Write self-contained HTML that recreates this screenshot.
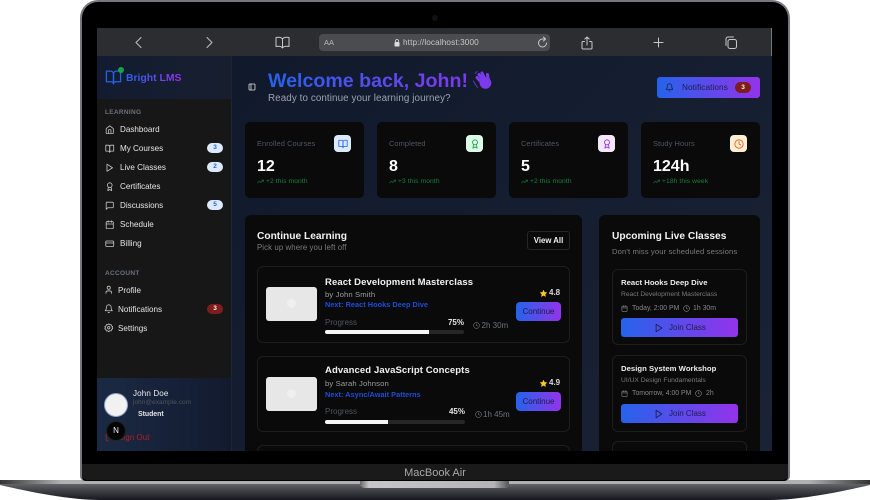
<!DOCTYPE html>
<html lang="en"><head><meta charset="utf-8"><title>Bright LMS</title>
<style>
*{box-sizing:border-box;margin:0;padding:0}
html,body{width:870px;height:500px;overflow:hidden;background:#fff;font-family:"Liberation Sans",sans-serif}
.a{position:absolute}
.t{position:absolute;white-space:nowrap;line-height:12px;height:12px}
.i{position:absolute;fill:none;stroke:currentColor;stroke-width:2;stroke-linecap:round;stroke-linejoin:round}
.grad{background:linear-gradient(90deg,#2563eb,#9333ea)}
#screen{position:absolute;left:97px;top:28px;width:675px;height:423px;overflow:hidden;background:linear-gradient(135deg,#0f172a,#1a2235);filter:blur(.3px)}
#screen>*{margin-left:-97px;margin-top:-28px}
.nav{font-size:8.100px;color:#e5e5e5}
.nic{color:#c8c8c8;width:9.500px;height:9.500px;stroke-width:2}
.bdg{position:absolute;left:207px;width:16px;height:10px;border-radius:5px;background:#dbeafe;color:#2563eb;font-size:6.500px;font-weight:bold;text-align:center;line-height:10px}
.sec{font-size:6.500px;font-weight:bold;color:#6b7280;letter-spacing:.3px}
.stat{position:absolute;top:122px;width:119px;height:76px;background:#0a0a0a;border-radius:5px}
.lab{font-size:7.400px;color:#4f5561;letter-spacing:.1px}
.val{font-size:16px;font-weight:bold;color:#fff}
.tr{font-size:6.700px;color:#15803d;letter-spacing:.1px}
.sq{position:absolute;top:135px;width:17px;height:17px;border-radius:4px}
.sq svg{position:absolute;left:3.500px;top:3.500px;width:10px;height:10px}
.panel{position:absolute;top:215px;height:250px;background:#0a0a0a;border-radius:6px}
.card{position:absolute;background:#0a0a0a;border:1px solid #1d1d1f;border-radius:6px}
.thumb{position:absolute;left:266px;width:51px;height:34px;background:#e7e7e7;border-radius:3px}
.thumb:after{content:"";position:absolute;left:21px;top:12px;width:9px;height:9px;border-radius:50%;background:#efefef}
.h{font-size:9.500px;font-weight:bold;color:#f2f2f2;letter-spacing:.1px}
.by{font-size:7.700px;color:#9b9b9b;letter-spacing:.12px}
.nx{font-size:7.300px;color:#1d4ed8;font-weight:bold;letter-spacing:.05px}
.pr{font-size:8px;color:#4f5561}
.pc{font-size:8px;color:#e5e5e5;font-weight:bold}
.bar{position:absolute;height:4px;background:#262626;border-radius:2px;overflow:hidden}
.bar div{height:100%;background:#f5f5f5}
.tm{font-size:8px;color:#6b7280}
.btn{position:absolute;left:516px;width:45px;border-radius:4px;color:#1e1b4b;font-size:8px;text-align:center}
.h2{font-size:7.700px;font-weight:bold;color:#ececec;letter-spacing:.03px}
.s2{font-size:6.700px;color:#7a7a7a}
.m2{font-size:6.900px;color:#85858a}
.jb{position:absolute;left:621px;width:117px;height:19px;border-radius:3px;color:#1e1b4b;font-size:8px}
.jb span{position:absolute;left:48px;top:0;line-height:19px}
.jb svg{position:absolute;left:33px;top:4.500px;width:10px;height:10px;stroke-width:2}
.tt{font-size:10.200px;font-weight:bold;color:#f2f2f2}
</style></head><body>
<svg width="0" height="0" style="position:absolute">
<symbol id="book" viewBox="0 0 24 24"><path d="M2 3h6a4 4 0 0 1 4 4v14a3 3 0 0 0-3-3H2z"/><path d="M22 3h-6a4 4 0 0 0-4 4v14a3 3 0 0 1 3-3h7z"/></symbol>
<symbol id="home" viewBox="0 0 24 24"><path d="M3 9l9-7 9 7v11a2 2 0 0 1-2 2H5a2 2 0 0 1-2-2z"/><path d="M9 22V12h6v10"/></symbol>
<symbol id="play" viewBox="0 0 24 24"><polygon points="5 3 19 12 5 21"/></symbol>
<symbol id="award" viewBox="0 0 24 24"><circle cx="12" cy="8" r="6"/><path d="M15.477 12.89 17 22l-5-3-5 3 1.523-9.11"/></symbol>
<symbol id="msg" viewBox="0 0 24 24"><path d="M21 15a2 2 0 0 1-2 2H7l-4 4V5a2 2 0 0 1 2-2h14a2 2 0 0 1 2 2z"/></symbol>
<symbol id="cal" viewBox="0 0 24 24"><rect x="3" y="4" width="18" height="18" rx="2"/><path d="M16 2v4M8 2v4M3 10h18"/></symbol>
<symbol id="card" viewBox="0 0 24 24"><rect x="2" y="5" width="20" height="14" rx="2"/><path d="M2 10h20"/></symbol>
<symbol id="user" viewBox="0 0 24 24"><path d="M19 21v-2a4 4 0 0 0-4-4H9a4 4 0 0 0-4 4v2"/><circle cx="12" cy="7" r="4"/></symbol>
<symbol id="bell" viewBox="0 0 24 24"><path d="M6 8a6 6 0 0 1 12 0c0 7 3 9 3 9H3s3-2 3-9"/><path d="M10.3 21a1.94 1.94 0 0 0 3.4 0"/></symbol>
<symbol id="gear" viewBox="0 0 24 24"><circle cx="12" cy="12" r="3"/><path d="M12 2l2.500 2.500 3.500-.5 1 3.500 3 2-1.500 2.500 1.500 2.500-3 2-1 3.500-3.500-.5L12 22l-2.500-2.500-3.500.5-1-3.500-3-2L3.500 12 2 9.500l3-2L6 4l3.500.5z"/></symbol>
<symbol id="clock" viewBox="0 0 24 24"><circle cx="12" cy="12" r="10"/><path d="M12 6v6l4 2"/></symbol>
<symbol id="trend" viewBox="0 0 24 24"><path d="M22 7l-8.500 8.500-5-5L2 17"/><path d="M16 7h6v6"/></symbol>
<symbol id="panel" viewBox="0 0 24 24"><rect x="3" y="3" width="18" height="18" rx="2"/><path d="M9 3v18"/></symbol>
<symbol id="out" viewBox="0 0 24 24"><path d="M9 21H5a2 2 0 0 1-2-2V5a2 2 0 0 1 2-2h4"/><path d="M16 17l5-5-5-5M21 12H9"/></symbol>
</svg>

<!-- base -->
<svg class="a" style="left:0;top:478px" width="870" height="22" viewBox="0 0 870 22">
<defs>
<linearGradient id="bg" x1="0" y1="0" x2="0" y2="1"><stop offset="0" stop-color="#74757a"/><stop offset=".45" stop-color="#45464c"/><stop offset="1" stop-color="#17181f"/></linearGradient>
<linearGradient id="st" x1="0" y1="0" x2="1" y2="0"><stop offset="0" stop-color="#333"/><stop offset=".07" stop-color="#b0b0b2"/><stop offset=".93" stop-color="#b0b0b2"/><stop offset="1" stop-color="#333"/></linearGradient>
<linearGradient id="nt" x1="0" y1="0" x2="1" y2="0"><stop offset="0" stop-color="#666"/><stop offset=".06" stop-color="#c6c6c8"/><stop offset=".9" stop-color="#b4b4b6"/><stop offset="1" stop-color="#55565a"/></linearGradient>
</defs>
<path d="M0 3H870V7C840 14 800 22 770 22H100C70 22 30 14 0 7Z" fill="url(#bg)"/>
<rect x="0" y="2" width="870" height="4" fill="url(#st)"/>
<path d="M360 2H509V8Q509 10 505 10H366Q360 10 360 6Z" fill="url(#nt)"/>
</svg>

<!-- body -->
<div class="a" style="left:80px;top:0;width:710px;height:481px;background:#000;border:2px solid #77787c;border-bottom:0;border-radius:18px 18px 5px 5px"></div>
<div class="a" style="left:82px;top:464px;width:706px;height:16px;background:#1a1a1a;border-radius:0 0 5px 5px"></div>
<div class="t" style="left:82px;width:706px;text-align:center;top:467px;font-size:11px;color:#a8a8a8">MacBook Air</div>
<div class="a" style="left:432px;top:15px;width:6px;height:6px;border-radius:50%;background:#101114"></div>

<div id="screen">
<!-- browser bar -->
<div class="a" style="left:97px;top:28px;width:675px;height:28px;background:#2b2d30"></div>
<div class="a" style="left:771px;top:28px;width:1px;height:28px;background:#777"></div>
<svg class="i" style="left:134px;top:36px;color:#b5b5b5;stroke-width:1.200" width="9" height="13" viewBox="0 0 9 13"><path d="M7 1.500 2 6.500l5 5"/></svg>
<svg class="i" style="left:205px;top:36px;color:#b5b5b5;stroke-width:1.200" width="9" height="13" viewBox="0 0 9 13"><path d="M2 1.500l5 5-5 5"/></svg>
<svg class="i" style="left:275px;top:36px;color:#c8c8c8;stroke-width:1" width="15" height="13" viewBox="0 0 15 13"><path d="M7.500 3C6.500 1.500 4 1 1 1.500v9C4 10 6.500 10.500 7.500 12c1-1.500 3.500-2 6.500-1.500v-9C11 1 8.500 1.500 7.500 3zM7.500 3v9"/></svg>
<div class="a" style="left:319px;top:34px;width:231px;height:17px;background:#4a4c4f;border-radius:4px"></div>
<div class="t" style="left:324px;top:37px;font-size:7.500px;color:#b8b8b8">AA</div>
<svg class="a" style="left:393.500px;top:39px" width="6" height="8" viewBox="0 0 6 8"><rect x=".5" y="3" width="5" height="4.500" rx=".8" fill="#ddd"/><path d="M1.500 3V2a1.500 1.500 0 0 1 3 0v1" fill="none" stroke="#ddd" stroke-width=".8"/></svg>
<div class="t" style="left:403px;top:37px;font-size:8.200px;color:#c8c8c8;letter-spacing:.12px">http://localhost:3000</div>
<svg class="i" style="left:537px;top:36px;color:#c8c8c8;stroke-width:1" width="11" height="12" viewBox="0 0 11 12"><path d="M9.500 7A4 4 0 1 1 5.500 3H8M6.500 1 8.500 3 6.500 5"/></svg>
<svg class="i" style="left:581px;top:36px;color:#c8c8c8;stroke-width:1" width="12" height="14" viewBox="0 0 12 14"><path d="M3.500 5.500H2a1 1 0 0 0-1 1v5.500a1 1 0 0 0 1 1h8a1 1 0 0 0 1-1V6.500a1 1 0 0 0-1-1H8.500M6 9V1M3.800 3 6 1l2.200 2"/></svg>
<svg class="i" style="left:653px;top:37px;color:#c8c8c8;stroke-width:1" width="11" height="11" viewBox="0 0 11 11"><path d="M5.500 1v9M1 5.500h9"/></svg>
<svg class="i" style="left:724px;top:36px;color:#c8c8c8;stroke-width:1" width="14" height="14" viewBox="0 0 14 14"><rect x="4" y="3.500" width="8.500" height="9" rx="2"/><path d="M2 9.500V3a2 2 0 0 1 2-2h5.500"/></svg>

<!-- sidebar -->
<div class="a" style="left:97px;top:56px;width:134px;height:43px;background:linear-gradient(90deg,#131b30,#171f2f)"></div>
<div class="a" style="left:97px;top:99px;width:134px;height:279px;background:#171717"></div>
<div class="a" style="left:97px;top:378px;width:134px;height:73px;background:linear-gradient(90deg,#1b2a44,#121a2e)"></div>
<div class="a" style="left:231px;top:56px;width:1px;height:395px;background:#1e2433"></div>
<svg class="i" style="left:105px;top:69px;color:#2563eb;stroke-width:1.800" width="17" height="17"><use href="#book"/></svg>
<div class="a" style="left:118px;top:67px;width:6px;height:6px;border-radius:50%;background:#16a34a"></div>
<div class="t" style="left:126px;top:73px;font-size:10.400px;font-weight:bold;background:linear-gradient(90deg,#2563eb,#9333ea);-webkit-background-clip:text;background-clip:text;color:transparent">Bright LMS</div>

<div class="t sec" style="left:105px;top:107px">LEARNING</div>
<svg class="i nic" style="left:105px;top:124.500px"><use href="#home"/></svg><div class="t nav" style="left:120px;top:124px">Dashboard</div>
<svg class="i nic" style="left:105px;top:143.500px"><use href="#book"/></svg><div class="t nav" style="left:120px;top:143px">My Courses</div><div class="bdg" style="top:143px">3</div>
<svg class="i nic" style="left:105px;top:162.500px"><use href="#play"/></svg><div class="t nav" style="left:120px;top:162px">Live Classes</div><div class="bdg" style="top:162px">2</div>
<svg class="i nic" style="left:105px;top:181.500px"><use href="#award"/></svg><div class="t nav" style="left:120px;top:181px">Certificates</div>
<svg class="i nic" style="left:105px;top:200.500px"><use href="#msg"/></svg><div class="t nav" style="left:120px;top:200px">Discussions</div><div class="bdg" style="top:200px">5</div>
<svg class="i nic" style="left:105px;top:219.500px"><use href="#cal"/></svg><div class="t nav" style="left:120px;top:219px">Schedule</div>
<svg class="i nic" style="left:105px;top:238.500px"><use href="#card"/></svg><div class="t nav" style="left:120px;top:238px">Billing</div>

<div class="t sec" style="left:105px;top:268px">ACCOUNT</div>
<svg class="i nic" style="left:104px;top:285px"><use href="#user"/></svg><div class="t nav" style="left:118px;top:285px">Profile</div>
<svg class="i nic" style="left:104px;top:304px"><use href="#bell"/></svg><div class="t nav" style="left:118px;top:304px">Notifications</div><div class="bdg" style="top:304px;background:#7f1d1d;color:#f5f5f5">3</div>
<svg class="i nic" style="left:104px;top:323px"><use href="#gear"/></svg><div class="t nav" style="left:118px;top:323px">Settings</div>

<div class="a" style="left:103.500px;top:393px;width:24px;height:24px;border-radius:50%;background:#f1f1f1;border:1px solid #8da4c8"></div>
<div class="t" style="left:133px;top:388px;font-size:8px;color:#ececec;letter-spacing:.15px">John Doe</div>
<div class="t" style="left:133px;top:397px;font-size:6.400px;color:#4b5563;letter-spacing:.1px">john@example.com</div>
<div class="t" style="left:138px;top:409px;font-size:6.900px;font-weight:bold;color:#e5e5e5">Student</div>
<svg class="i" style="left:105px;top:433px;color:#b91c1c" width="9" height="9"><use href="#out"/></svg>
<div class="t" style="left:118px;top:432px;font-size:7.900px;color:#b91c1c;letter-spacing:.1px">Sign Out</div>
<div class="a" style="left:107px;top:422px;width:18px;height:18px;border-radius:50%;background:#050505;color:#f5f5f5;font-size:8px;text-align:center;line-height:18px;box-shadow:0 0 0 1px #222">N</div>

<!-- header -->
<svg class="i" style="left:248px;top:83px;color:#e0e0e0;stroke-width:2.400" width="8" height="8"><use href="#panel"/></svg>
<div class="t" style="left:268px;top:69px;height:24px;line-height:24px;font-size:19.600px;font-weight:bold;background:linear-gradient(90deg,#2563eb,#7c3aed 95%);-webkit-background-clip:text;background-clip:text;color:transparent">Welcome back, John!</div>
<svg class="a" style="left:472px;top:69px" width="21" height="21" viewBox="0 0 21 21"><circle cx="13.500" cy="14" r="5.800" fill="#7c3aed"/><path d="M11 15 5 8.500M12.500 13 7 5.500M14 12l-4-8M16.500 12.500l-1-7" stroke="#7c3aed" stroke-width="3" stroke-linecap="round" fill="none"/><path d="M5 2.500 3 4.500M1.500 12l1.500 3M3.500 15.500l2 3" stroke="#5b34c9" stroke-width="1" stroke-linecap="round" fill="none"/></svg>
<div class="t" style="left:268px;top:93px;font-size:9.800px;color:#9ca3af;letter-spacing:.1px">Ready to continue your learning journey?</div>

<div class="a grad" style="left:657px;top:77px;width:103px;height:21px;border-radius:3px"></div>
<svg class="i" style="left:665px;top:83px;color:#1e1b4b" width="9" height="9"><use href="#bell"/></svg>
<div class="t" style="left:682px;top:81.500px;font-size:8.200px;color:#1e1b4b;letter-spacing:.1px">Notifications</div>
<div class="a" style="left:735px;top:82px;width:16px;height:11px;border-radius:5.500px;background:#7f1d1d;color:#f5f5f5;font-size:6.500px;font-weight:bold;text-align:center;line-height:11px">3</div>

<!-- stats -->
<div class="stat" style="left:245px"></div><div class="stat" style="left:377px"></div><div class="stat" style="left:509px"></div><div class="stat" style="left:641px"></div>
<div class="t lab" style="left:257px;top:138px">Enrolled Courses</div>
<div class="t lab" style="left:389px;top:138px">Completed</div>
<div class="t lab" style="left:521px;top:138px">Certificates</div>
<div class="t lab" style="left:653px;top:138px">Study Hours</div>
<div class="sq" style="left:334px;background:#dbeafe;color:#2563eb"><svg class="i"><use href="#book"/></svg></div>
<div class="sq" style="left:466px;background:#dcfce7;color:#16a34a"><svg class="i"><use href="#award"/></svg></div>
<div class="sq" style="left:598px;background:#f3e8ff;color:#9333ea"><svg class="i"><use href="#award"/></svg></div>
<div class="sq" style="left:730px;background:#ffedd5;color:#ea580c"><svg class="i"><use href="#clock"/></svg></div>
<div class="t val" style="left:257px;top:160px;height:14px;line-height:14px">12</div>
<div class="t val" style="left:389px;top:160px;height:14px;line-height:14px">8</div>
<div class="t val" style="left:521px;top:160px;height:14px;line-height:14px">5</div>
<div class="t val" style="left:653px;top:160px;height:14px;line-height:14px">124h</div>
<svg class="i" style="left:257px;top:178px;color:#15803d" width="7" height="7"><use href="#trend"/></svg><div class="t tr" style="left:266px;top:176px">+2 this month</div>
<svg class="i" style="left:389px;top:178px;color:#15803d" width="7" height="7"><use href="#trend"/></svg><div class="t tr" style="left:398px;top:176px">+3 this month</div>
<svg class="i" style="left:521px;top:178px;color:#15803d" width="7" height="7"><use href="#trend"/></svg><div class="t tr" style="left:530px;top:176px">+2 this month</div>
<svg class="i" style="left:653px;top:178px;color:#15803d" width="7" height="7"><use href="#trend"/></svg><div class="t tr" style="left:662px;top:176px">+18h this week</div>

<!-- continue learning -->
<div class="panel" style="left:245px;width:337px"></div>
<div class="t tt" style="left:257px;top:231px">Continue Learning</div>
<div class="t" style="left:257px;top:242px;font-size:7.800px;color:#7a7a7a;letter-spacing:.1px">Pick up where you left off</div>
<div class="a" style="left:527px;top:231px;width:43px;height:19px;border:1px solid #262626;border-radius:3px;color:#f0f0f0;font-size:7.800px;font-weight:bold;text-align:center;line-height:17px">View All</div>

<div class="card" style="left:257px;top:266px;width:313px;height:77px"></div>
<div class="thumb" style="top:287px"></div>
<div class="t h" style="left:325px;top:277px">React Development Masterclass</div>
<div class="t by" style="left:325px;top:289px">by John Smith</div>
<div class="t nx" style="left:325px;top:299px">Next: React Hooks Deep Dive</div>
<div class="t pr" style="left:325px;top:317px">Progress</div>
<div class="t pc" style="left:419px;width:45px;text-align:right;top:317px">75%</div>
<div class="bar" style="left:325px;top:330px;width:139px"><div style="width:75%"></div></div>
<svg class="i" style="left:473px;top:321.500px;color:#6b7280" width="7" height="7"><use href="#clock"/></svg>
<div class="t tm" style="left:481.500px;top:319.500px">2h 30m</div>
<svg class="a" style="left:539px;top:288.500px" width="9" height="9" viewBox="0 0 24 24"><polygon points="12 2 15.090 8.260 22 9.270 17 14.140 18.180 21.020 12 17.770 5.820 21.020 7 14.140 2 9.270 8.910 8.260" fill="#facc15"/></svg>
<div class="t" style="left:549px;top:287px;font-size:8px;font-weight:bold;color:#d8d8d8">4.8</div>
<div class="btn grad" style="top:302px;height:19px;line-height:19px">Continue</div>

<div class="card" style="left:257px;top:356px;width:313px;height:76px"></div>
<div class="thumb" style="top:377px"></div>
<div class="t h" style="left:325px;top:365px">Advanced JavaScript Concepts</div>
<div class="t by" style="left:325px;top:378px">by Sarah Johnson</div>
<div class="t nx" style="left:325px;top:389px">Next: Async/Await Patterns</div>
<div class="t pr" style="left:325px;top:406px">Progress</div>
<div class="t pc" style="left:420px;width:45px;text-align:right;top:406px">45%</div>
<div class="bar" style="left:325px;top:420px;width:140px"><div style="width:45%"></div></div>
<svg class="i" style="left:475px;top:411px;color:#6b7280" width="7" height="7"><use href="#clock"/></svg>
<div class="t tm" style="left:483px;top:409px">1h 45m</div>
<svg class="a" style="left:539px;top:378.500px" width="9" height="9" viewBox="0 0 24 24"><polygon points="12 2 15.090 8.260 22 9.270 17 14.140 18.180 21.020 12 17.770 5.820 21.020 7 14.140 2 9.270 8.910 8.260" fill="#facc15"/></svg>
<div class="t" style="left:549px;top:377px;font-size:8px;font-weight:bold;color:#d8d8d8">4.9</div>
<div class="btn grad" style="top:392px;height:19px;line-height:19px">Continue</div>

<div class="card" style="left:257px;top:445px;width:313px;height:40px"></div>

<!-- upcoming -->
<div class="panel" style="left:599px;width:161px"></div>
<div class="t tt" style="left:612px;top:231px">Upcoming Live Classes</div>
<div class="t" style="left:612px;top:246px;font-size:7.700px;color:#7a7a7a;letter-spacing:.1px">Don't miss your scheduled sessions</div>

<div class="card" style="left:612px;top:269px;width:135px;height:76px"></div>
<div class="t h2" style="left:621px;top:277px">React Hooks Deep Dive</div>
<div class="t s2" style="left:621px;top:289px">React Development Masterclass</div>
<svg class="i" style="left:621px;top:305px;color:#85858a" width="7" height="7"><use href="#cal"/></svg>
<div class="t m2" style="left:632px;top:302.500px">Today, 2:00 PM</div>
<svg class="i" style="left:683px;top:305px;color:#85858a" width="7" height="7"><use href="#clock"/></svg>
<div class="t m2" style="left:693px;top:302.500px">1h 30m</div>
<div class="jb grad" style="top:318px"><svg class="i"><use href="#play"/></svg><span>Join Class</span></div>

<div class="card" style="left:612px;top:355px;width:135px;height:77px"></div>
<div class="t h2" style="left:621px;top:363px">Design System Workshop</div>
<div class="t s2" style="left:621px;top:375px">UI/UX Design Fundamentals</div>
<svg class="i" style="left:621px;top:390px;color:#85858a" width="7" height="7"><use href="#cal"/></svg>
<div class="t m2" style="left:632px;top:387.500px">Tomorrow, 4:00 PM</div>
<svg class="i" style="left:695px;top:390px;color:#85858a" width="7" height="7"><use href="#clock"/></svg>
<div class="t m2" style="left:706px;top:387.500px">2h</div>
<div class="jb grad" style="top:404px"><svg class="i"><use href="#play"/></svg><span>Join Class</span></div>

<div class="card" style="left:612px;top:441px;width:135px;height:40px"></div>
</div>
</body></html>
